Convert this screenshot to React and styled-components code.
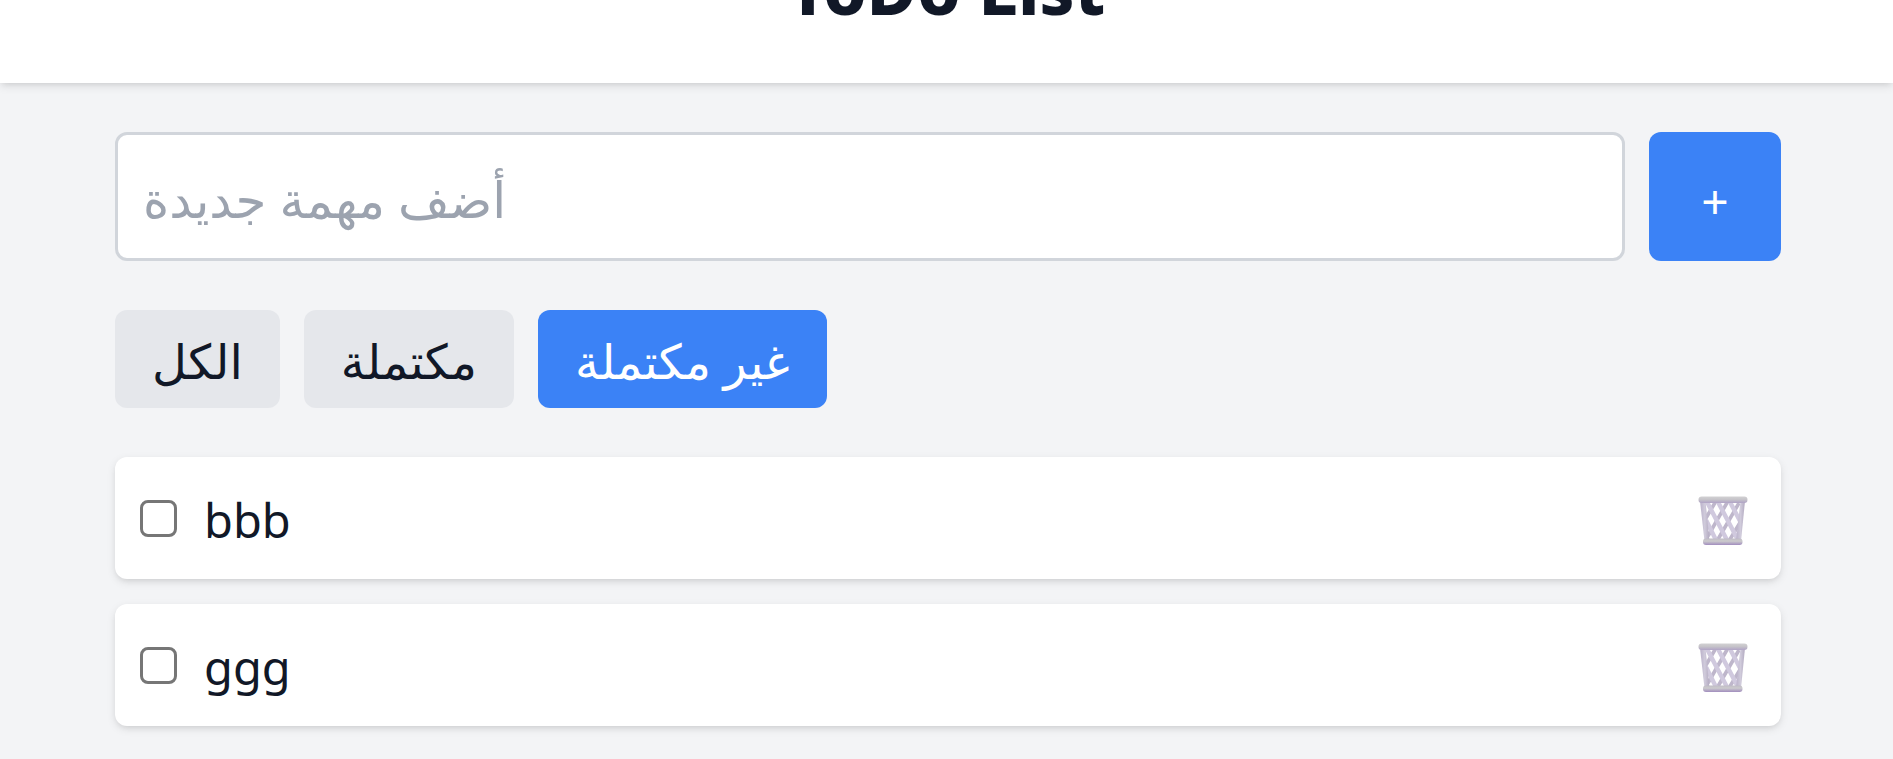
import React, { useState } from "react";
import styled, { createGlobalStyle } from "styled-components";

const GlobalStyle = createGlobalStyle`
  *, *::before, *::after { box-sizing: border-box; }
  body {
    margin: 0;
    background: #f3f4f6;
    color: #111827;
    font-family: "Noto Sans", "DejaVu Sans", sans-serif;
    font-size: 48px;
    line-height: 72px;
  }
  button, input { font: inherit; color: inherit; margin: 0; }
`;

const Page = styled.div`
  min-height: 100vh;
  overflow: hidden;
`;

const Header = styled.header`
  background: #fff;
  padding-bottom: 48px;
  box-shadow: 0 3px 9px rgba(0, 0, 0, 0.1), 0 3px 6px -3px rgba(0, 0, 0, 0.1);
`;

const Title = styled.h1`
  margin: -59px 0 0;
  font-size: 69px;
  line-height: 94px;
  font-weight: 800;
  text-align: center;
`;

const Main = styled.main`
  display: flex;
  flex-direction: column;
  gap: 49px;
  padding: 49px 112px 24px 115px;
`;

const AddForm = styled.form`
  display: flex;
  gap: 24px;
`;

const TaskInput = styled.input`
  flex: 1;
  min-width: 0;
  height: 129px;
  padding: 4px 25px 0;
  border: 3px solid #d1d5db;
  border-radius: 12px;
  background: #fff;
  outline: none;
  font-size: 50px;
  &::placeholder { color: #9ca3af; opacity: 1; }
`;

const AddButton = styled.button`
  width: 132px;
  padding: 8px 0 0;
  border: 0;
  border-radius: 12px;
  background: #3b82f6;
  color: #fff;
  cursor: pointer;
`;

const Filters = styled.div`
  display: flex;
  gap: 24px;
`;

const FilterButton = styled.button`
  height: 98px;
  padding: 4px 37px 0;
  border: 0;
  border-radius: 12px;
  white-space: nowrap;
  background: ${(p) => (p.$active ? "#3b82f6" : "#e5e7eb")};
  color: ${(p) => (p.$active ? "#fff" : "#111827")};
  cursor: pointer;
`;

const TaskList = styled.ul`
  display: flex;
  flex-direction: column;
  gap: 25px;
  margin: 0;
  padding: 0;
  list-style: none;
`;

const TaskCard = styled.li`
  display: flex;
  align-items: center;
  justify-content: space-between;
  height: 122px;
  padding: 0 25px;
  border-radius: 12px;
  background: #fff;
  box-shadow: 0 3px 9px rgba(0, 0, 0, 0.1), 0 3px 6px -3px rgba(0, 0, 0, 0.1);
`;

const TaskLabel = styled.label`
  display: flex;
  align-items: center;
  gap: 27px;
`;

const TaskText = styled.span`
  padding-top: 4px;
  font-size: 47px;
`;

const Checkbox = styled.input`
  appearance: none;
  width: 37px;
  height: 37px;
  border: 3px solid #767676;
  border-radius: 8px;
  background: #fff;
  &:checked { background: #3b82f6; border-color: #3b82f6; }
`;

const DeleteButton = styled.button`
  display: flex;
  padding: 6px 8px 0;
  border: 0;
  background: none;
  cursor: pointer;
`;

function Wastebasket({ id }) {
  const rim = `rim-${id}`;
  const post = `post-${id}`;
  const base = `base-${id}`;
  return (
    <svg width="50" height="50" viewBox="0 0 50 50" aria-hidden="true">
      <defs>
        <linearGradient id={rim} x1="0" y1="0" x2="0" y2="1">
          <stop offset="0" stopColor="#d2d1d3" />
          <stop offset="0.45" stopColor="#c6c4c9" />
          <stop offset="1" stopColor="#b0a3c6" />
        </linearGradient>
        <linearGradient id={base} x1="0" y1="0" x2="0" y2="1">
          <stop offset="0" stopColor="#bfbbc5" />
          <stop offset="0.4" stopColor="#cccbcd" />
          <stop offset="1" stopColor="#a18dbe" />
        </linearGradient>
        <linearGradient id={post} x1="0" y1="0" x2="1" y2="0">
          <stop offset="0" stopColor="#b9b0c9" />
          <stop offset="0.5" stopColor="#d0cbdb" />
          <stop offset="1" stopColor="#b2a9c0" />
        </linearGradient>
      </defs>
      <g fill="none" stroke="#beb6cb" strokeWidth="3.6">
        <path d="M18 5 8 22M30 5 10 40M41 7 19 45M43 25 31 45" />
      </g>
      <g fill="none" stroke="#d0c9de" strokeWidth="4.4">
        <path d="M8 24 18 44M9 6 29 44M20 6 40 44M32 6 42 25" />
      </g>
      <path d="M2 5h5.500L11.500 45H6.500Z" fill={`url(#${post})`} />
      <path d="M42.500 5H47L43 45h-5Z" fill={`url(#${post})`} />
      <rect x="0.500" y="0.500" width="49" height="6.500" rx="3.200" fill={`url(#${rim})`} />
      <rect x="5" y="42.500" width="39.500" height="6.500" rx="3" fill={`url(#${base})`} />
    </svg>
  );
}

const filters = [
  { id: "all", label: "الكل" },
  { id: "done", label: "مكتملة" },
  { id: "open", label: "غير مكتملة" },
];

export default function App() {
  const [filter, setFilter] = useState("open");
  const [draft, setDraft] = useState("");
  const [tasks, setTasks] = useState([
    { id: 1, text: "bbb", done: false },
    { id: 2, text: "ggg", done: false },
  ]);

  const addTask = (e) => {
    e.preventDefault();
    if (!draft.trim()) return;
    setTasks([...tasks, { id: Date.now(), text: draft.trim(), done: false }]);
    setDraft("");
  };
  const toggle = (id) =>
    setTasks(tasks.map((t) => (t.id === id ? { ...t, done: !t.done } : t)));
  const shown = tasks.filter((t) => filter === "all" || t.done === (filter === "done"));

  return (
    <Page>
      <GlobalStyle />
      <Header>
        <Title>ToDo List</Title>
      </Header>
      <Main>
        <AddForm onSubmit={addTask}>
          <TaskInput
            type="text"
            aria-label="أضف مهمة جديدة"
            placeholder="أضف مهمة جديدة"
            value={draft}
            onChange={(e) => setDraft(e.target.value)}
          />
          <AddButton type="submit">+</AddButton>
        </AddForm>
        <Filters>
          {filters.map((f) => (
            <FilterButton
              key={f.id}
              type="button"
              $active={filter === f.id}
              aria-pressed={filter === f.id}
              onClick={() => setFilter(f.id)}
            >
              {f.label}
            </FilterButton>
          ))}
        </Filters>
        <TaskList>
          {shown.map((t) => (
            <TaskCard key={t.id}>
              <TaskLabel>
                <Checkbox type="checkbox" checked={t.done} onChange={() => toggle(t.id)} />
                <TaskText>{t.text}</TaskText>
              </TaskLabel>
              <DeleteButton
                type="button"
                aria-label="حذف"
                onClick={() => setTasks(tasks.filter((x) => x.id !== t.id))}
              >
                <Wastebasket id={t.id} />
              </DeleteButton>
            </TaskCard>
          ))}
        </TaskList>
      </Main>
    </Page>
  );
}
